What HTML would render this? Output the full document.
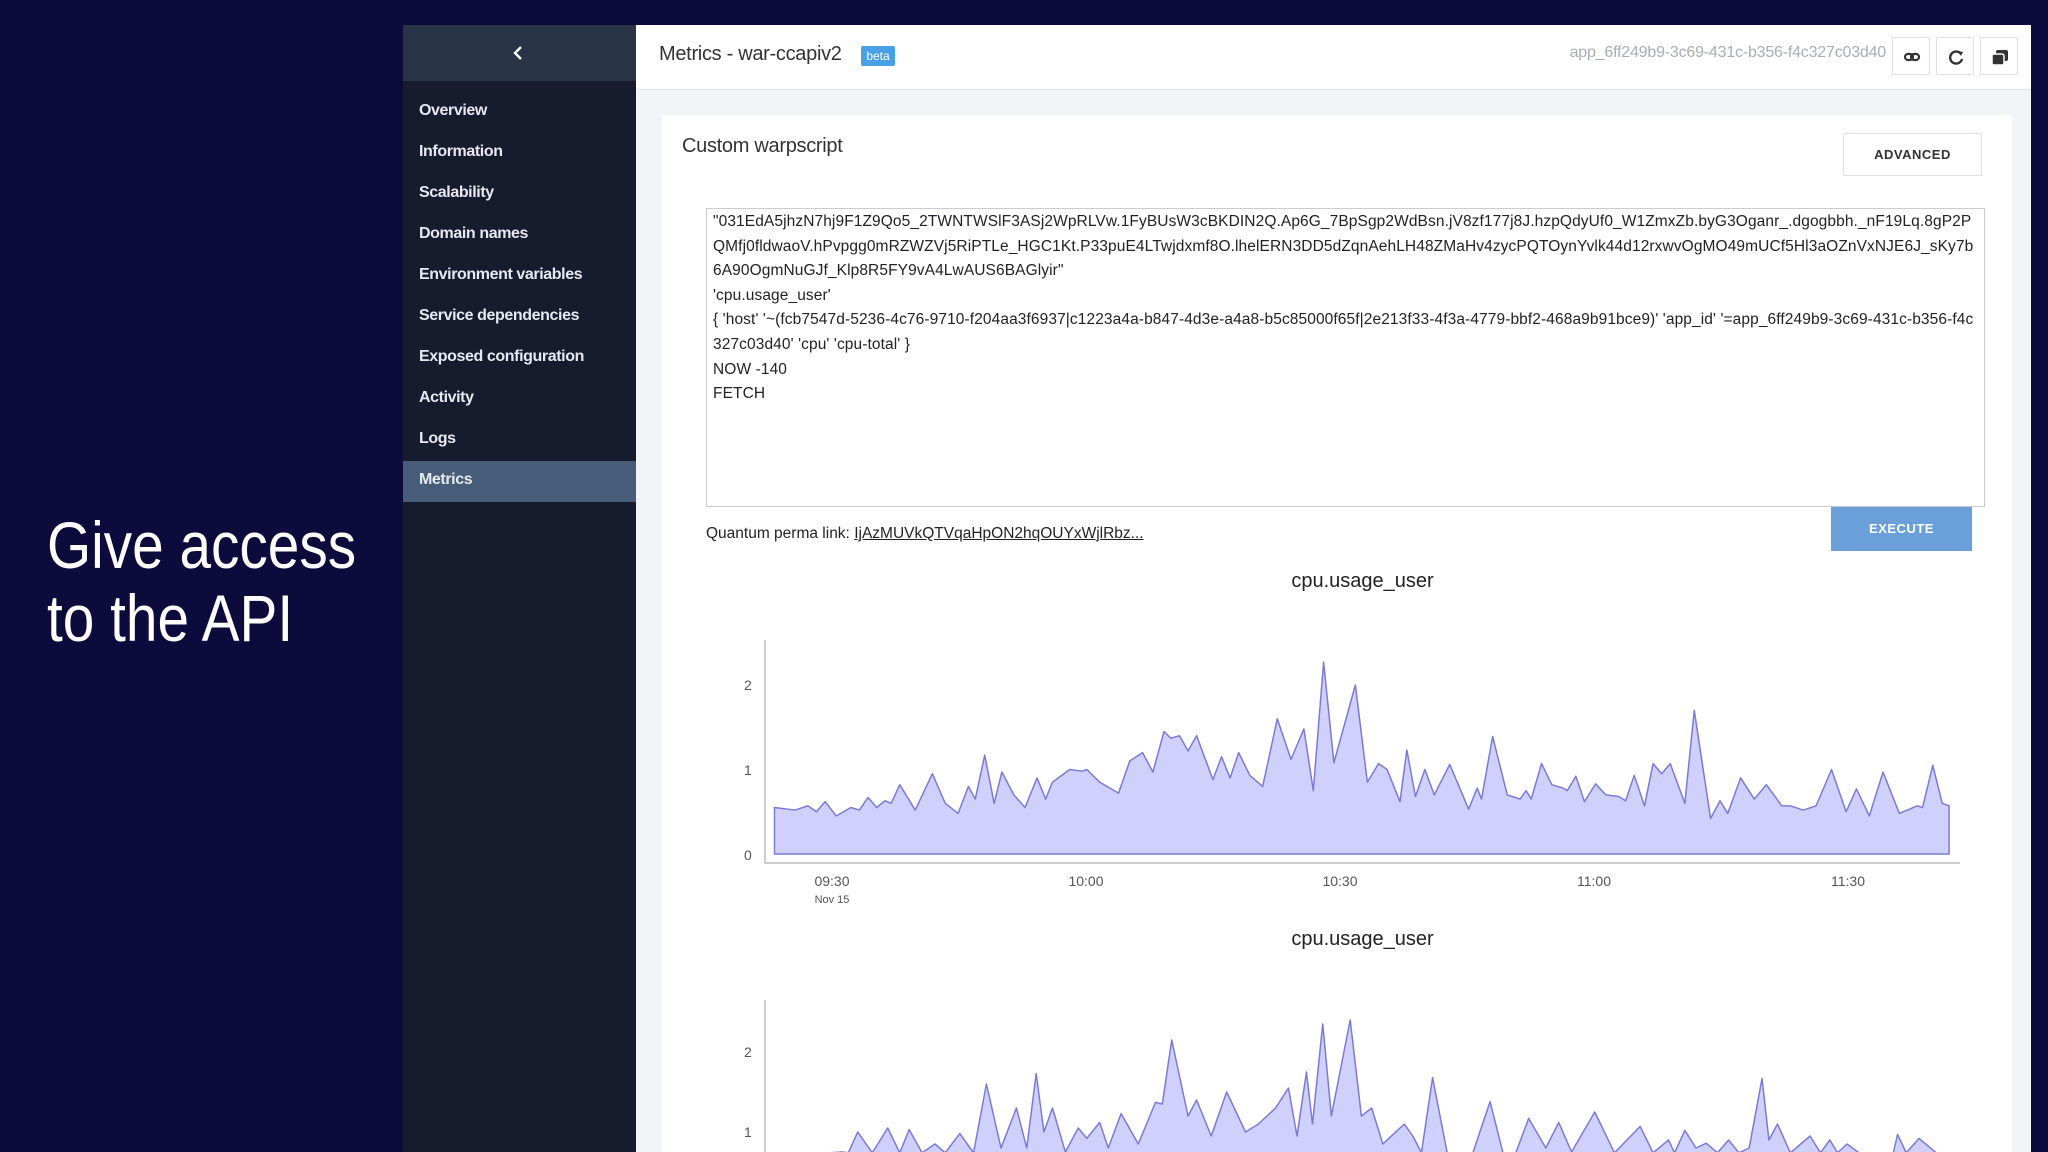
<!DOCTYPE html>
<html style="overflow:hidden"><head><meta charset="utf-8"><style>
*{margin:0;padding:0;box-sizing:border-box}
html,body{width:2048px;height:1152px;overflow:hidden}
body{background:#0d0b3b;font-family:"Liberation Sans",sans-serif;position:relative}
.abs{position:absolute}
.big{left:47px;color:#fff;font-size:66px;font-weight:300;transform:scaleX(0.86);transform-origin:left;white-space:nowrap;line-height:1}
.side{left:403px;top:25px;width:233px;height:1127px;background:#161b2d}
.sidetop{left:0;top:0;width:233px;height:56px;background:#2a3447}
.nav{left:16px;color:#e6e9ef;font-size:16px;font-weight:bold;letter-spacing:-0.4px}
.main{left:636px;top:25px;width:1395px;height:1127px;background:#f3f4f8;overflow:hidden}
.hdr{left:0;top:0;width:1395px;height:65px;background:#fff;border-bottom:1px solid #e2e4ea}
.card{left:26px;top:90px;width:1350px;height:1037px;background:#fff}
.btn{background:#fff;border:1px solid #dcdfe5;border-radius:2px}
.code{font-size:15.5px;color:#222;line-height:24.6px;letter-spacing:0.1px}
</style></head><body>
<div class="abs big" style="top:512px">Give access</div>
<div class="abs big" style="top:585px">to the API</div>

<div class="abs side">
 <div class="abs sidetop"><svg class="abs" style="left:109px;top:20px" width="14" height="16" viewBox="0 0 14 16"><path d="M9 2 L3 8 L9 14" stroke="#fff" stroke-width="2.4" fill="none"/></svg></div>
 <div class="abs nav" style="top:77px">Overview</div>
 <div class="abs nav" style="top:118px">Information</div>
 <div class="abs nav" style="top:159px">Scalability</div>
 <div class="abs nav" style="top:200px">Domain names</div>
 <div class="abs nav" style="top:241px">Environment variables</div>
 <div class="abs nav" style="top:282px">Service dependencies</div>
 <div class="abs nav" style="top:323px">Exposed configuration</div>
 <div class="abs nav" style="top:364px">Activity</div>
 <div class="abs nav" style="top:405px">Logs</div>
 <div class="abs" style="left:0;top:436px;width:233px;height:41px;background:#475c78"></div>
 <div class="abs nav" style="top:446px">Metrics</div>
</div>

<div class="abs main">
 <div class="abs hdr">
  <div class="abs" style="left:23px;top:18px;font-size:20px;color:#333;letter-spacing:-0.3px">Metrics - war-ccapiv2</div>
  <div class="abs" style="left:225px;top:21px;width:34px;height:20px;background:#4aa0e6;color:#fff;font-size:12px;text-align:center;line-height:20px;border-radius:2px">beta</div>
  <div class="abs" style="left:922px;top:19px;width:328px;text-align:right;font-size:16px;color:#a9adb6;letter-spacing:-0.2px;white-space:nowrap">app_6ff249b9-3c69-431c-b356-f4c327c03d40</div>
  <div class="abs btn" style="left:1256px;top:12px;width:38px;height:38px"><svg width="38" height="38"><g fill="none" stroke="#333" stroke-width="2.2"><rect x="12" y="16" width="8" height="6" rx="3"/><rect x="18" y="16" width="8" height="6" rx="3"/></g></svg></div>
  <div class="abs btn" style="left:1300px;top:12px;width:38px;height:38px"><svg width="38" height="38"><path d="M24 16 A6 6 0 1 0 25 21" fill="none" stroke="#333" stroke-width="2.4"/><path d="M21 13 L26 14 L24 18Z" fill="#333"/></svg></div>
  <div class="abs btn" style="left:1344px;top:12px;width:38px;height:38px"><svg width="38" height="38"><rect x="15" y="12" width="12" height="11" rx="2" fill="#333"/><rect x="11" y="16" width="12" height="11" rx="2" fill="#333" stroke="#fff" stroke-width="1.5"/></svg></div>
 </div>
 <div class="abs card">
  <div class="abs" style="left:20px;top:20px;font-size:20px;color:#333;letter-spacing:-0.3px">Custom warpscript</div>
  <div class="abs btn" style="left:1181px;top:18px;width:139px;height:43px;font-size:13px;font-weight:bold;color:#333;text-align:center;line-height:41px;letter-spacing:0.5px">ADVANCED</div>
  <div class="abs" style="left:44px;top:93px;width:1279px;height:299px;border:1px solid #c9ccd2;background:#fff"></div>
  <div class="abs code" style="left:51px;top:95px;width:1262px;word-break:break-all">"031EdA5jhzN7hj9F1Z9Qo5_2TWNTWSlF3ASj2WpRLVw.1FyBUsW3cBKDIN2Q.Ap6G_7BpSgp2WdBsn.jV8zf177j8J.hzpQdyUf0_W1ZmxZb.byG3Oganr_.dgogbbh._nF19Lq.8gP2PQMfj0fldwaoV.hPvpgg0mRZWZVj5RiPTLe_HGC1Kt.P33puE4LTwjdxmf8O.lhelERN3DD5dZqnAehLH48ZMaHv4zycPQTOynYvlk44d12rxwvOgMO49mUCf5Hl3aOZnVxNJE6J_sKy7b6A90OgmNuGJf_Klp8R5FY9vA4LwAUS6BAGlyir"<br>'cpu.usage_user'<br>{ 'host' '~(fcb7547d-5236-4c76-9710-f204aa3f6937|c1223a4a-b847-4d3e-a4a8-b5c85000f65f|2e213f33-4f3a-4779-bbf2-468a9b91bce9)' 'app_id' '=app_6ff249b9-3c69-431c-b356-f4c327c03d40' 'cpu' 'cpu-total' }<br>NOW -140<br>FETCH</div>
  <div class="abs" style="left:44px;top:410px;font-size:15.5px;color:#222;letter-spacing:0">Quantum perma link: <span style="text-decoration:underline">IjAzMUVkQTVqaHpON2hqOUYxWjlRbz...</span></div>
  <div class="abs" style="left:1169px;top:392px;width:141px;height:44px;background:#6a9fd9;color:#fff;font-size:13px;font-weight:bold;text-align:center;line-height:44px;letter-spacing:0.5px">EXECUTE</div>
 </div>
</div>

<div class="abs" style="left:1200px;top:570px;width:325px;text-align:center;font-size:20px;color:#222">cpu.usage_user</div>
<div class="abs" style="left:1200px;top:928px;width:325px;text-align:center;font-size:20px;color:#222">cpu.usage_user</div>

<svg class="abs" style="left:0;top:0;overflow:hidden" width="2048" height="1152">
 <g stroke="#ccc" stroke-width="2" fill="none">
  <path d="M765 640 V863 H1960"/>
  <path d="M765 1000 V1152"/>
 </g>
 <g font-family="Liberation Sans" font-size="14" fill="#555">
  <text x="744" y="690">2</text><text x="744" y="775">1</text><text x="744" y="860">0</text>
  <text x="744" y="1057">2</text><text x="744" y="1137">1</text>
  <g text-anchor="middle"><text x="832" y="886">09:30</text><text x="1086" y="886">10:00</text><text x="1340" y="886">10:30</text><text x="1594" y="886">11:00</text><text x="1848" y="886">11:30</text>
  <text x="832" y="903" font-size="11">Nov 15</text></g>
 </g>
 <g transform="matrix(0.858,0,0,-84.5,700.7,854)">
  <path vector-effect="non-scaling-stroke" fill="#cfd0fb" stroke="#7c7ad6" stroke-width="1.5" stroke-linejoin="round" d="M86 0 L86 .55 L110 .52 L125 .57 L135 .5 L145 .62 L158 .45 L175 .55 L185 .52 L195 .67 L205 .55 L215 .63 L222 .6 L232 .82 L250 .52 L270 .95 L285 .6 L300 .48 L312 .8 L320 .65 L331 1.17 L342 .6 L351 .97 L365 .7 L378 .55 L392 .9 L402 .65 L410 .85 L430 1.0 L445 .98 L450 1.0 L465 .85 L487 .72 L500 1.1 L515 1.2 L527 .97 L540 1.45 L548 1.37 L558 1.4 L568 1.22 L578 1.4 L597 .88 L607 1.15 L617 .9 L627 1.2 L640 .93 L655 .8 L672 1.6 L688 1.12 L703 1.48 L714 .75 L726 2.27 L738 1.08 L763 2.0 L777 .85 L790 1.07 L800 1.0 L815 .62 L823 1.23 L833 .68 L844 1.0 L855 .7 L873 1.06 L895 .53 L905 .78 L910 .65 L923 1.39 L940 .7 L955 .65 L962 .75 L968 .65 L980 1.07 L992 .82 L1005 .78 L1010 .75 L1020 .92 L1030 .62 L1043 .83 L1055 .7 L1070 .68 L1078 .63 L1088 .93 L1100 .57 L1110 1.07 L1120 .95 L1130 1.07 L1147 .6 L1158 1.7 L1177 .42 L1188 .63 L1197 .48 L1212 .9 L1228 .65 L1242 .82 L1260 .57 L1270 .57 L1285 .52 L1300 .57 L1318 1.0 L1335 .5 L1347 .77 L1362 .45 L1378 .97 L1397 .48 L1418 .57 L1424 .55 L1436 1.05 L1447 .6 L1455 .57 L1455 0 Z"/>
 </g>
 <g transform="matrix(0.858,0,0,-80,700.7,1212)">
  <path vector-effect="non-scaling-stroke" fill="#cfd0fb" stroke="#7c7ad6" stroke-width="1.5" stroke-linejoin="round" d="M86 .74 L150 .74 L165 .75 L172 .74 L183 1.0 L200 .74 L218 1.05 L232 .74 L243 1.03 L258 .74 L273 .85 L285 .74 L302 .98 L318 .74 L333 1.6 L350 .8 L368 1.3 L380 .8 L391 1.73 L400 1.0 L410 1.3 L425 .75 L440 1.05 L450 .92 L465 1.12 L475 .8 L490 1.23 L510 .85 L530 1.37 L538 1.35 L549 2.15 L568 1.2 L578 1.4 L595 .95 L613 1.5 L635 1.0 L650 1.1 L670 1.3 L685 1.55 L695 .95 L706 1.75 L713 1.1 L725 2.35 L735 1.2 L757 2.4 L770 1.2 L782 1.3 L795 .85 L820 1.1 L830 .95 L840 .74 L853 1.68 L870 .74 L900 .74 L920 1.38 L935 .74 L950 .74 L965 1.17 L985 .8 L1000 1.12 L1015 .75 L1042 1.25 L1065 .74 L1095 1.07 L1110 .74 L1128 .9 L1135 .74 L1147 1.02 L1160 .8 L1172 .86 L1185 .74 L1198 .9 L1210 .74 L1222 .8 L1237 1.67 L1245 .9 L1255 1.1 L1270 .74 L1293 .95 L1305 .74 L1316 .9 L1325 .74 L1336 .85 L1350 .74 L1390 .74 L1395 .97 L1405 .74 L1420 .92 L1440 .74 L1455 .74 Z"/>
 </g>
</svg>
</body></html>
